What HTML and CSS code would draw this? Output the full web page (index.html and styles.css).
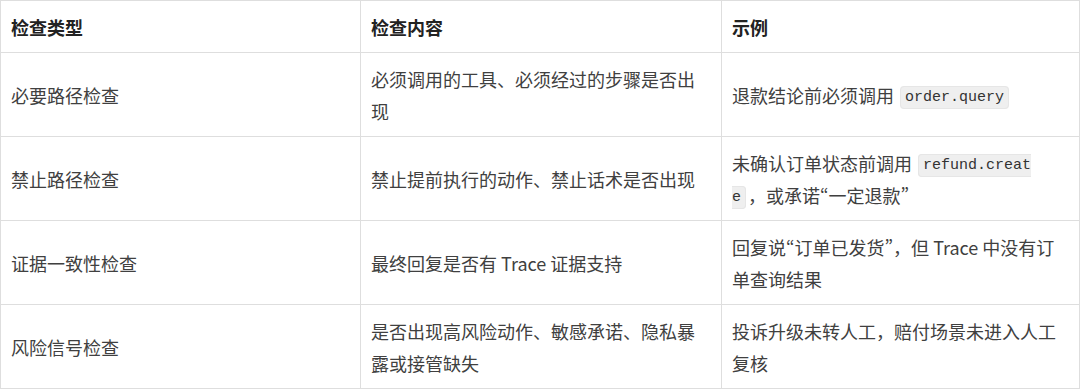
FILE: index.html
```html
<!DOCTYPE html>
<html lang="zh-CN">
<head>
<meta charset="utf-8">
<title>检查类型</title>
<link rel="stylesheet" href="styles.css">
</head>
<body>
<table class="check-table">
  <colgroup>
    <col class="col-type">
    <col class="col-content">
    <col class="col-example">
  </colgroup>
  <thead>
    <tr>
      <th>检查类型</th>
      <th>检查内容</th>
      <th class="last">示例</th>
    </tr>
  </thead>
  <tbody>
    <tr>
      <td>必要路径检查</td>
      <td>必须调用的工具、必须经过的步骤是否出现</td>
      <td class="last">退款结论前必须调用 <code>order.query</code></td>
    </tr>
    <tr>
      <td>禁止路径检查</td>
      <td>禁止提前执行的动作、禁止话术是否出现</td>
      <td class="last">未确认订单状态前调用 <code>refund.create</code>，或承诺<span class="q">“一定退款”</span></td>
    </tr>
    <tr>
      <td>证据一致性检查</td>
      <td>最终回复是否有 Trace 证据支持</td>
      <td class="last">回复说<span class="q">“订单已发货”</span>，但 Trace 中没有订单查询结果</td>
    </tr>
    <tr>
      <td>风险信号检查</td>
      <td>是否出现高风险动作、敏感承诺、隐私暴露或接管缺失</td>
      <td class="last">投诉升级未转人工，赔付场景未进入人工复核</td>
    </tr>
  </tbody>
</table>
</body>
</html>
```
FILE: styles.css
```css
html, body {
  margin: 0;
  padding: 0;
  background: #ffffff;
}

.check-table {
  border-collapse: collapse;
  table-layout: fixed;
  width: 1079px;
  font-family: "Noto Sans CJK SC", sans-serif;
  font-size: 18px;
  line-height: 32px;
  color: #404040;
}

.col-type { width: 360px; }
.col-content { width: 361px; }
.col-example { width: 358px; }

.check-table th,
.check-table td {
  border: 1px solid #dedede;
  padding: 10px 12px 9px 10px;
  height: 32px;
  text-align: left;
  vertical-align: middle;
}

.check-table td.last,
.check-table th.last {
  padding-right: 18px;
}

.check-table th {
  font-weight: 700;
  color: #222222;
}

/* quoted phrase: narrow (proportional) quote marks, as in the reference */
.check-table .q {
  font-variant-east-asian: proportional-width;
}

.check-table code {
  font-family: "Liberation Mono", monospace;
  font-size: 15px;
  line-height: 16px;
  color: #333333;
  background: #efefef;
  border: 1px solid #e6e6e6;
  border-radius: 4px;
  padding: 2px 4px;
  margin: 0 2px;
  vertical-align: 2px;
  word-break: break-all;
}
```
